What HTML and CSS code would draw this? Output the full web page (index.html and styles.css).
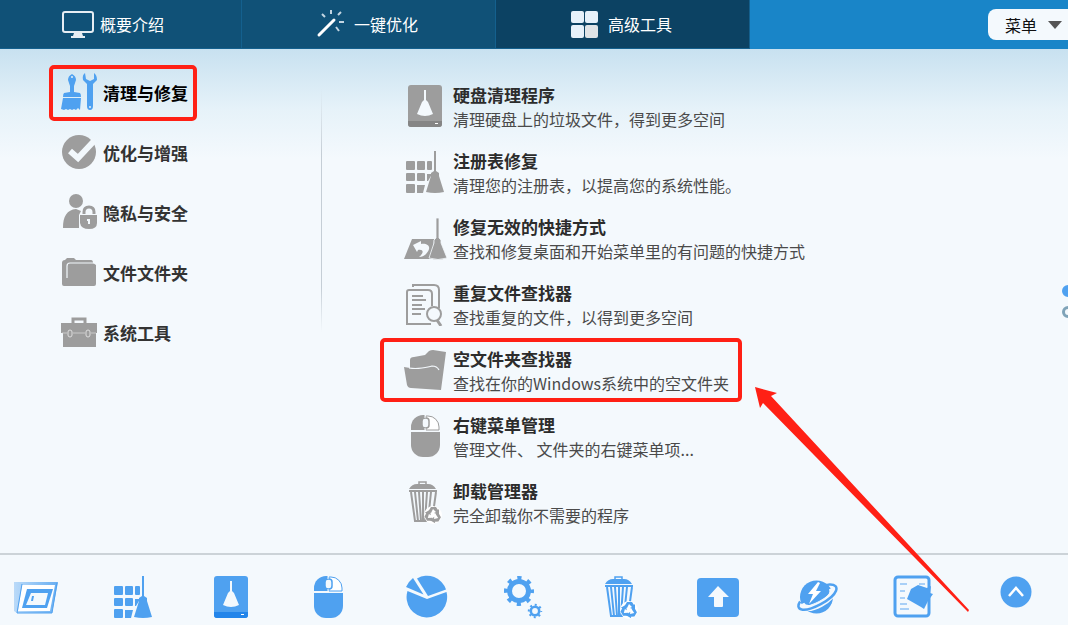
FILE: index.html
```html
<!DOCTYPE html>
<html lang="zh-CN">
<head>
    <meta charset="UTF-8">
    <meta name="viewport" content="width=device-width, initial-scale=1.0">
    <title>高级工具</title>
    <link rel="stylesheet" href="styles.css">
</head>
<body>
    <svg class="sprite" aria-hidden="true">
        <defs>
            <linearGradient id="speed" x1="0" x2="1">
                <stop offset="0" stop-color="#4fa1f0" stop-opacity=".35"/>
                <stop offset="1" stop-color="#4fa1f0" stop-opacity=".85"/>
            </linearGradient>
        </defs>
        <symbol id="disk" viewBox="0 0 44 44">
            <rect x="5" y="1" width="34" height="42" rx="3" fill="currentColor"/>
            <path class="disk-base" d="M5 37h34v3a3 3 0 0 1-3 3H8a3 3 0 0 1-3-3z"/>
            <path d="M21 6h2v10l2 2 5 12q-8 4-16 0l5-12 2-2z" fill="#f4f9fd"/>
            <rect x="32" y="39" width="3" height="1" fill="#fff"/>
        </symbol>
        <symbol id="registry" viewBox="0 0 44 44">
            <g fill="currentColor">
                <rect x="3" y="11" width="9" height="9" rx="1"/><rect x="14" y="11" width="8" height="9" rx="1"/><rect x="24" y="11" width="5" height="9" rx="1"/>
                <rect x="3" y="23" width="9" height="8" rx="1"/><rect x="14" y="23" width="8" height="8" rx="1"/><path d="M24 24h4v2l-3 5h-1z"/>
                <rect x="3" y="34" width="9" height="9" rx="1"/><path d="M14 35h8l-2 8h-6z"/>
                <path d="M31 1h2v20l3 2v3l5 16q-9 2-18 0l5-16v-3l3-2z"/>
            </g>
        </symbol>
        <symbol id="shortcut" viewBox="0 0 44 44">
            <path d="M9 23h22l-2 20H1z" fill="currentColor"/>
            <path d="M10 29l8-4v3c8-1 11 4 5 10-2 2-4 3-7 3 5-4 5-8-1-7l-1 2z" fill="#f4f9fd"/>
            <path d="M33 2h3v20l2 2v3l6 15q-9 3-18 0l5-15v-3l2-2z" fill="currentColor" stroke="#f4f9fd" stroke-width=".8"/>
        </symbol>
        <symbol id="duplicate" viewBox="0 0 44 44">
            <g fill="none" stroke="currentColor" stroke-width="2">
                <path d="M10 5V3h21q5 0 5 5v18"/>
                <path d="M29 24V12q0-4-4-4H6q-2 0-2 2v32h24"/>
                <path d="M9 14h11M9 18h14M9 23h10M9 27h13M9 32h9"/>
                <circle cx="31" cy="32" r="7"/>
                <path d="M34 38l4 6" stroke-width="3"/>
            </g>
        </symbol>
        <symbol id="emptyfolder" viewBox="0 0 44 44">
            <path d="M1 19l6 1V12q0-3 4-3l11-2 4-4q2-1 4-1l13 2-5 38-30-2q-3 0-4-3z" fill="currentColor"/>
            <path d="M6 20q6 1 13 0t10-2q5 0 7 4" fill="none" stroke="#f4f9fd" stroke-width="1.2"/>
        </symbol>
        <symbol id="mouse" viewBox="0 0 44 44">
            <path d="M8 18h29v13a12 12 0 0 1-12 12h-5A12 12 0 0 1 8 31z" fill="currentColor"/>
            <path d="M8 16v-3A12 12 0 0 1 20 1h2v15z" fill="currentColor"/>
            <path d="M23 2h2a11 11 0 0 1 11 11v3H23z" fill="#fff" stroke="currentColor" stroke-width="1"/>
            <rect x="19" y="4" width="7" height="10" rx="3" fill="#f4f9fd" stroke="currentColor" stroke-width="1.5"/>
            <path d="M22 0v4M22 14v3" stroke="#f4f9fd" stroke-width="1"/>
        </symbol>
        <symbol id="trash" viewBox="0 0 44 44">
            <path d="M16 4V2h7v2" fill="none" stroke="currentColor" stroke-width="1.5"/>
            <path d="M6 9q3-5 8-5h11q5 0 8 5z" fill="currentColor"/>
            <path d="M6 11h28M8 12l4 29h17l4-29" fill="none" stroke="currentColor" stroke-width="2"/>
            <path d="M12 12l3 29M16 12l2 29M20 12v29M24 12l-2 29M28 12l-3 29" stroke="currentColor" stroke-width="2"/>
            <circle cx="30" cy="35" r="9" fill="#fff"/>
            <g fill="currentColor">
                <path d="M25 32l3-5h5l2 3 1-1v6l-5-2 2-1-3-3-2 4z"/>
                <path d="M25 32l3-5h5l2 3 1-1v6l-5-2 2-1-3-3-2 4z" transform="rotate(120 30 35)"/>
                <path d="M25 32l3-5h5l2 3 1-1v6l-5-2 2-1-3-3-2 4z" transform="rotate(240 30 35)"/>
            </g>
        </symbol>
    </svg>

    <div class="app">
        <header class="topbar">
            <nav class="tabs">
                <a class="tab" href="#">
                    <svg width="32" height="30" viewBox="0 0 32 30"><rect x="1" y="3" width="30" height="20" rx="2" fill="none" stroke="#e6edf3" stroke-width="2"/><path d="M12 24h8l1 3h2v2H9v-2h2z" fill="#e6edf3"/></svg>
                    <span>概要介绍</span>
                </a>
                <a class="tab" href="#">
                    <svg width="32" height="30" viewBox="0 0 32 30"><path d="M3 26L18 11" stroke="#fff" stroke-width="3" stroke-linecap="round"/><path d="M6 5l3 3M15 1v4M25 3l-3 3M23 13h5M20 18l3 4" stroke="#c3d5e2" stroke-width="2"/></svg>
                    <span>一键优化</span>
                </a>
                <a class="tab active" href="#" aria-current="page">
                    <svg width="32" height="30" viewBox="0 0 32 30"><g fill="#e6f1fa"><rect x="1" y="2" width="13" height="12" rx="2"/><rect x="15" y="2" width="13" height="12" rx="2"/><rect x="1" y="16" width="13" height="13" rx="2"/><rect x="15" y="16" width="13" height="13" rx="2" fill="#dfe3e6"/></g></svg>
                    <span>高级工具</span>
                </a>
            </nav>
            <button class="menu" type="button">菜单
                <svg width="16" height="10" viewBox="0 0 16 10"><path d="M1 1h14L8 9z" fill="#555"/></svg>
            </button>
        </header>

        <main class="content">
            <nav class="categories">
                <a class="category marked active" href="#">
                    <svg width="36" height="38" viewBox="0 0 36 38"><g fill="currentColor"><path d="M11 1q-4 2-4 6l2 6v6l-6 1q-1 1-1 4h18q0-3-1-4l-6-1v-6l2-6q0-4-4-6z"/><path d="M2 25h18l-1 12-2-2-2 2-2-1-2 1-2-1-2 1-2-1-2 1-3-1z"/><path d="M24 0q-3 2-2 7l4 4v22q0 4 3 4t3-4V11l4-4q0-5-3-7v6l-4 2-4-2z"/></g><circle cx="11" cy="4" r="1" fill="#e6f2f9"/><circle cx="29" cy="34" r="1" fill="#e6f2f9"/></svg>
                    <span>清理与修复</span>
                </a>
                <a class="category" href="#">
                    <svg width="36" height="38" viewBox="0 0 36 38"><circle cx="18" cy="19" r="17" fill="currentColor"/><path d="M9 18l8 7L33 8" fill="none" stroke="#f2f8fc" stroke-width="6"/></svg>
                    <span>优化与增强</span>
                </a>
                <a class="category" href="#">
                    <svg width="36" height="38" viewBox="0 0 36 38"><g fill="currentColor"><circle cx="15" cy="8" r="7"/><path d="M2 35c0-12 4-18 13-19l5 2-2 4v13z"/><path d="M19 22h17v8q0 6-8 6t-9-6z"/></g><path d="M23 21v-2q0-5 5-5t5 5v2" fill="none" stroke="currentColor" stroke-width="3"/><path d="M26 26h3v5h-2v-3h-1z" fill="#f2f8fc"/></svg>
                    <span>隐私与安全</span>
                </a>
                <a class="category" href="#">
                    <svg width="36" height="38" viewBox="0 0 36 38"><path d="M1 10q0-3 3-3l2-2h7l2 2h15q2 0 2 3l3 2v19q0 2-2 2H3q-2 0-2-2z" fill="currentColor"/><path d="M6 25V13q0-3 3-3h24" fill="none" stroke="#f2f8fc" stroke-width="1.2"/></svg>
                    <span>文件文件夹</span>
                </a>
                <a class="category" href="#">
                    <svg width="36" height="38" viewBox="0 0 36 38"><path d="M12 10V6h12v4" fill="none" stroke="currentColor" stroke-width="3"/><path d="M0 10h36v10h-1v14H2V20H0z" fill="currentColor"/><path d="M1 20h5m6 0h12m6 0h5" stroke="#ddd" stroke-width=".7"/><rect x="7" y="17" width="4" height="7" rx="2" fill="none" stroke="#ddd"/><rect x="25" y="17" width="4" height="7" rx="2" fill="none" stroke="#ddd"/></svg>
                    <span>系统工具</span>
                </a>
            </nav>

            <ul class="tools">
                <li><a class="tool" href="#">
                    <svg width="44" height="44"><use href="#disk"/></svg>
                    <span class="tool-text"><b>硬盘清理程序</b><span>清理硬盘上的垃圾文件，得到更多空间</span></span>
                </a></li>
                <li><a class="tool" href="#">
                    <svg width="44" height="44"><use href="#registry"/></svg>
                    <span class="tool-text"><b>注册表修复</b><span>清理您的注册表，以提高您的系统性能。</span></span>
                </a></li>
                <li><a class="tool" href="#">
                    <svg width="44" height="44"><use href="#shortcut"/></svg>
                    <span class="tool-text"><b>修复无效的快捷方式</b><span>查找和修复桌面和开始菜单里的有问题的快捷方式</span></span>
                </a></li>
                <li><a class="tool" href="#">
                    <svg width="44" height="44"><use href="#duplicate"/></svg>
                    <span class="tool-text"><b>重复文件查找器</b><span>查找重复的文件，以得到更多空间</span></span>
                </a></li>
                <li><a class="tool marked" href="#">
                    <svg width="44" height="44"><use href="#emptyfolder"/></svg>
                    <span class="tool-text"><b>空文件夹查找器</b><span>查找在你的Windows系统中的空文件夹</span></span>
                </a></li>
                <li><a class="tool" href="#">
                    <svg width="44" height="44"><use href="#mouse"/></svg>
                    <span class="tool-text"><b>右键菜单管理</b><span>管理文件、 文件夹的右键菜单项...</span></span>
                </a></li>
                <li><a class="tool" href="#">
                    <svg width="44" height="44"><use href="#trash"/></svg>
                    <span class="tool-text"><b>卸载管理器</b><span>完全卸载你不需要的程序</span></span>
                </a></li>
            </ul>

            <div class="pager">
                <button class="dot current" type="button" aria-label="第1页"></button>
                <button class="dot" type="button" aria-label="第2页"></button>
            </div>
        </main>

        <footer class="dock">
            <div class="dock-items">
                <button type="button" aria-label="启动管理"><svg width="44" height="44" viewBox="0 0 44 44"><path d="M0 7h44l-6 31H3L0 36z" fill="url(#speed)"/><path d="M8 10h33l-5 26H4z" fill="#fff"/><path d="M43 8l-5 30H3L8 9" fill="none" stroke="#4fa1f0"/><path d="M13 14h26l-6 19H8z" fill="#4fa1f0"/><path d="M17 18h17l-3 12H12z" fill="#f4f9fd"/><path d="M18 21h2l-1 5h-2z" fill="#4fa1f0"/></svg></button>
                <button type="button" aria-label="注册表修复"><svg width="44" height="44"><use href="#registry"/></svg></button>
                <button type="button" aria-label="硬盘清理程序"><svg width="44" height="44"><use href="#disk"/></svg></button>
                <button type="button" aria-label="右键菜单管理"><svg width="44" height="44"><use href="#mouse"/></svg></button>
                <button type="button" aria-label="磁盘分析"><svg width="44" height="44" viewBox="0 0 44 44"><g fill="currentColor"><path d="M3.500 16L23 24 42.500 17A20.300 20.300 0 1 1 3.500 16z"/><path d="M24 21L13 3.500A20 20 0 0 1 42 14.500z"/><path d="M19.500 19.500L2 12q2-5 7-9z"/></g></svg></button>
                <button type="button" aria-label="系统设置"><svg width="44" height="44" viewBox="0 0 44 44"><g fill="none" stroke="currentColor"><circle cx="18" cy="16" r="9.500" stroke-width="5"/><circle cx="18" cy="16" r="13" stroke-width="4" stroke-dasharray="4.200 6.010" stroke-dashoffset="2.100"/><circle cx="34" cy="36" r="4.200" stroke-width="2.600"/><circle cx="34" cy="36" r="6.200" stroke-width="2" stroke-dasharray="2 2.870" stroke-dashoffset="1"/></g></svg></button>
                <button type="button" aria-label="卸载管理器"><svg width="44" height="44"><use href="#trash"/></svg></button>
                <button type="button" aria-label="软件更新"><svg width="44" height="44" viewBox="0 0 44 44"><rect x="1" y="3" width="42" height="39" rx="4" fill="currentColor"/><path d="M22 11l11 11h-6v9q0 1-1 1h-7q-1 0-1-1v-9h-6z" fill="#f4f9fd"/></svg></button>
                <button type="button" aria-label="网络加速"><svg width="44" height="44" viewBox="0 0 44 44"><circle cx="22.500" cy="22" r="16.500" fill="currentColor"/><g transform="rotate(-28 23 22)" fill="none"><path d="M6 21q0 9 17 9t17-9" stroke="#f4f9fd" stroke-width="6"/><path d="M6 18C-3 23 3 30 23 30s27-8 17-13q-2-1-5-1" stroke="currentColor" stroke-width="2.500"/><path d="M6 24q6 3 17 3t17-4" stroke="#f4f9fd" stroke-width="1"/></g><path d="M24 7l-10 12h5l-4 10 12-13h-5l4-8z" fill="#fff"/></svg></button>
                <button type="button" aria-label="文件粉碎"><svg width="44" height="44" viewBox="0 0 44 44"><rect x="4" y="2" width="34" height="39" rx="3" fill="none" stroke="currentColor" stroke-width="3"/><path d="M9 9h7M9 16h5M9 23h5M9 29h7M9 34h9M28 9h6" stroke="#a9d0f7" stroke-width="2"/><path d="M27 10l9 3 4-2-1 7 3 1-5 7-4 8-3-2-14-8 4-10z" fill="currentColor"/></svg></button>
            </div>
            <button type="button" aria-label="展开"><svg width="44" height="34" viewBox="0 0 44 34"><circle cx="22" cy="17" r="15.500" fill="currentColor"/><path d="M15 21l7-8 7 8" fill="none" stroke="#fff" stroke-width="2.500"/></svg></button>
        </footer>

        <svg class="pointer" width="216" height="226" viewBox="0 0 216 226" aria-hidden="true"><path d="M0 0l22 6-6 3L214 223l-1 2L8 16l-3 5z" fill="#ff2015"/></svg>
    </div>
</body>
</html>
```
FILE: styles.css
```css
* { box-sizing: border-box; }
body {
    margin: 0;
    font-family: "Noto Sans CJK SC", sans-serif;
    font-size: 16px;
    color: #333;
}
a { color: inherit; text-decoration: none; }
button { border: none; padding: 0; background: none; font: inherit; color: inherit; cursor: pointer; }
svg { display: block; flex: none; }
.sprite { position: absolute; width: 0; height: 0; }

.app {
    --disk-base: #858585;
    position: relative;
    display: flex;
    flex-direction: column;
    min-height: 100vh;
    overflow: hidden;
    background: #f4f9fd;
}

/* 顶部标签栏 */
.topbar {
    display: flex;
    justify-content: space-between;
    align-items: center;
    height: 49px;
    background: #1985c8;
}
.tabs { display: flex; height: 100%; margin-left: -12px; }
.tab {
    display: flex;
    align-items: center;
    gap: 6px;
    width: 254px;
    padding-left: 74px;
    background: #105177;
    border-right: 1px solid #14608e;
    border-bottom: 1px solid #14608e;
    color: #fff;
}
.tab.active { background: #0c4263; }
.menu {
    display: flex;
    align-items: center;
    gap: 10px;
    height: 31px;
    padding: 0 5px 0 17px;
    background: #f4f9fd;
    border-radius: 8px 0 0 8px;
    color: #111;
}

.content {
    flex: 1;
    display: flex;
    align-items: flex-start;
    padding: 16px 0 16px 49px;
    background: linear-gradient(#c8e1f0, #e6f2f9 60px, #f4f9fd 110px);
}

/* 左侧分类 */
.categories {
    display: flex;
    flex-direction: column;
    align-items: flex-start;
    gap: 4px;
    width: 273px;
    border-right: 1px solid;
    border-image: linear-gradient(transparent 8%, #c5ced6 30%, #c5ced6 75%, transparent 90%) 1;
}
.category {
    display: flex;
    align-items: center;
    gap: 6px;
    height: 56px;
    padding: 0 5px 2px 8px;
    border: 4px solid transparent;
    border-radius: 5px;
    font-size: 17px;
    font-weight: bold;
}
.category svg { color: #9d9d9d; }
.category.active { color: #000; }
.category.active svg { color: #4fa1f0; }

/* 工具列表 */
.tools {
    flex: 1;
    display: flex;
    flex-direction: column;
    gap: 2px;
    margin: 0;
    padding: 9px 0 0 58px;
    list-style: none;
}
.tools li { display: flex; }
.tool {
    display: flex;
    align-items: center;
    gap: 6px;
    height: 64px;
    padding: 0 9px 0 19px;
    border: 4px solid transparent;
    border-radius: 5px;
    color: #9d9d9d;
    white-space: nowrap;
}
.tool-text { display: flex; flex-direction: column; padding-top: 2px; line-height: 24px; color: #4a4a4a; }
.tool-text b { font-size: 17px; color: #2c2c2c; }
.disk-base { fill: var(--disk-base); }

.category.marked, .tool.marked { border-color: #ff2015; }

.pager { align-self: center; display: flex; flex-direction: column; gap: 9px; margin-right: -6px; }
.dot { width: 12px; height: 12px; border: 3px solid #7fa3b8; border-radius: 50%; }
.dot.current { border-color: #4fa1f0; background: #4fa1f0; }

/* 底部快捷栏 */
.dock {
    --disk-base: #2385ea;
    display: flex;
    align-items: flex-start;
    gap: 59px;
    padding: 20px 30px 6px 14px;
    border-top: 2px solid #ccd3d8;
    color: #4fa1f0;
}
.dock-items { flex: 1; display: flex; justify-content: space-between; }

/* 指向标记工具的箭头 */
.pointer { position: absolute; left: 755px; top: 387px; pointer-events: none; }
```
